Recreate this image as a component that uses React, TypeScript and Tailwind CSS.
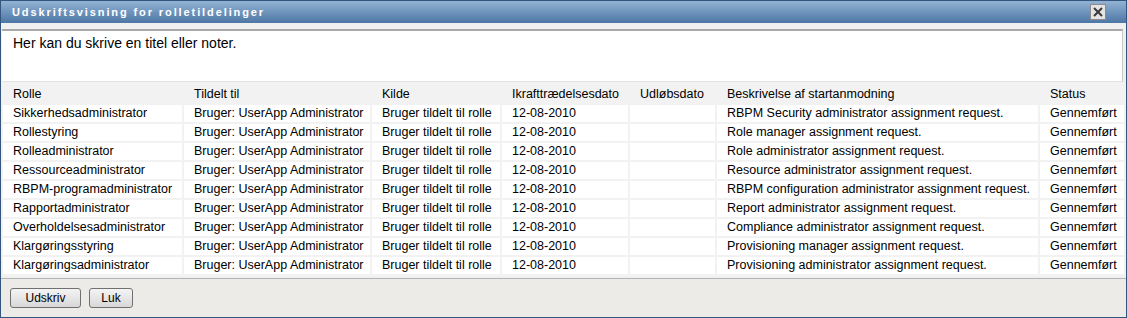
import React from 'react';

const rows = [
  ['Sikkerhedsadministrator', 'RBPM Security administrator assignment request.'],
  ['Rollestyring', 'Role manager assignment request.'],
  ['Rolleadministrator', 'Role administrator assignment request.'],
  ['Ressourceadministrator', 'Resource administrator assignment request.'],
  ['RBPM-programadministrator', 'RBPM configuration administrator assignment request.'],
  ['Rapportadministrator', 'Report administrator assignment request.'],
  ['Overholdelsesadministrator', 'Compliance administrator assignment request.'],
  ['Klargøringsstyring', 'Provisioning manager assignment request.'],
  ['Klargøringsadministrator', 'Provisioning administrator assignment request.'],
];

const headers = ['Rolle', 'Tildelt til', 'Kilde', 'Ikrafttrædelsesdato', 'Udløbsdato', 'Beskrivelse af startanmodning', 'Status'];
const widths = ['w-[179px]', 'w-[186px]', 'w-[128px]', 'w-[126px]', 'w-[85px]', 'w-[321px]', 'w-[84px]'];

const CloseIcon = () => (
  <svg width="10" height="10" viewBox="0 0 10 10">
    <path d="M1 1 L9 9 M9 1 L1 9" stroke="#3a3a3a" strokeWidth="2" />
  </svg>
);

export default function App() {
  return (
    <div className="w-[1127px] h-[318px] flex flex-col border border-[#34557d] bg-[#f0f0f0] text-[12.5px] text-black overflow-hidden" style={{ fontFamily: '"Liberation Sans", Arial, sans-serif' }}>
      <div className="h-[22px] shrink-0 flex items-center justify-between pl-[11px] pr-[20px] bg-gradient-to-b from-[#93b3d4] to-[#4d77a4]">
        <span className="font-bold text-white tracking-[1.9px] text-[11px]">Udskriftsvisning for rolletildelinger</span>
        <button className="w-[16px] h-[16px] flex items-center justify-center bg-[#e4e4e4] border border-[#8c8c8c]">
          <CloseIcon />
        </button>
      </div>

      <div className="pt-[6px] px-[1px] pr-[3px] shrink-0">
        <div className="h-[53px] bg-white border-t-2 border-t-[#a9a9a9] border-r border-r-[#c8c8c8] border-b border-b-[#e2e2e2] pl-[11px] pt-[2px] text-[14px]">
          Her kan du skrive en titel eller noter.
        </div>
      </div>

      <table className="table-fixed border-separate border-spacing-x-[2px] border-spacing-y-[2px] w-[1123px] bg-[#f2f2f2]">
        <thead>
          <tr className="h-[19px]">
            {headers.map((h, i) => (
              <th key={h} className={`${widths[i]} font-normal text-left pl-[10px] pt-[1px] leading-[17px] whitespace-nowrap`}>{h}</th>
            ))}
          </tr>
        </thead>
        <tbody>
          {rows.map(([role, desc]) => (
            <tr key={role} className="h-[17px]">
              {[role, 'Bruger: UserApp Administrator', 'Bruger tildelt til rolle', '12-08-2010', '', desc, 'Gennemført'].map((c, i) => (
                <td key={i} className="bg-white pl-[10px] leading-[17px] whitespace-nowrap overflow-hidden p-0">{c}</td>
              ))}
            </tr>
          ))}
        </tbody>
      </table>

      <div className="mt-[2px] flex-1 border-t border-[#b4b4b4] bg-[#ecebe8] flex items-start gap-[8px] pl-[9px] pt-[9px]">
        <button className="w-[71px] h-[20px] rounded-[3px] border border-[#707070] bg-gradient-to-b from-[#f4f4f4] to-[#d8d8d8] text-[12px] leading-none">Udskriv</button>
        <button className="w-[44px] h-[20px] rounded-[3px] border border-[#707070] bg-gradient-to-b from-[#f4f4f4] to-[#d8d8d8] text-[12px] leading-none">Luk</button>
      </div>
    </div>
  );
}
